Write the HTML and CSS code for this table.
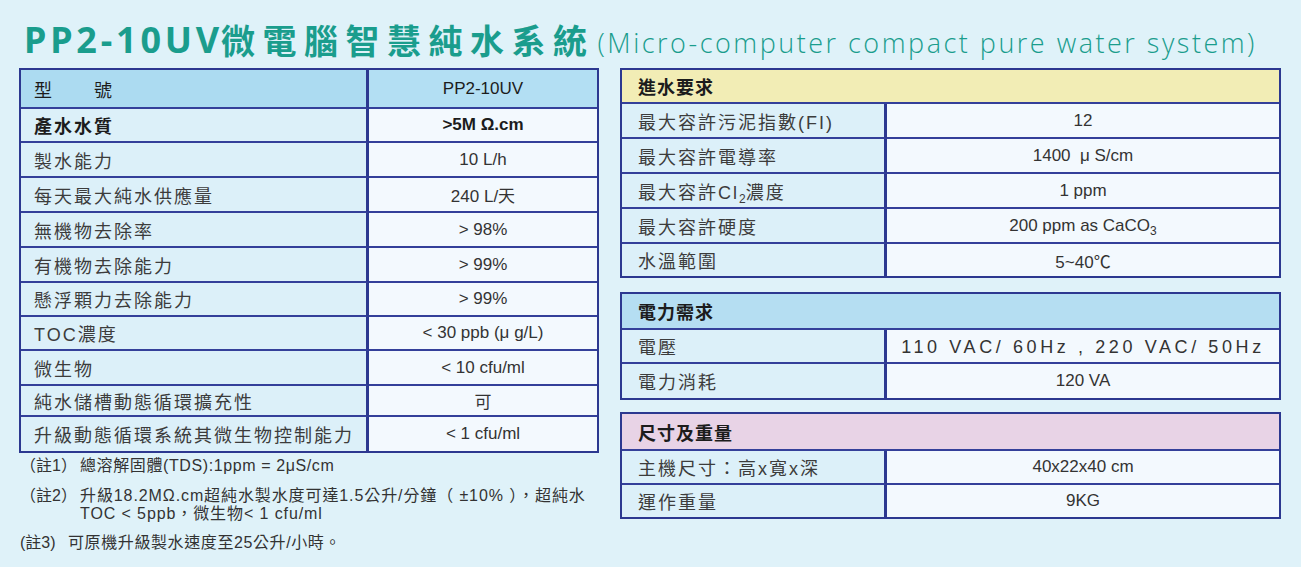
FILE: index.html
```html
<!DOCTYPE html>
<html lang="zh-Hant">
<head>
<meta charset="utf-8">
<title>PP2-10UV微電腦智慧純水系統</title>
<link rel="stylesheet" href="styles.css">
</head>
<body>
<div class="page">
  <h1 class="title"><span class="t-latin">PP2-10UV</span><span class="t-cjk">微電腦智慧純水系統</span><span class="t-en">(Micro-computer compact pure water system)</span></h1>
  <div class="content">
    <div class="left">
      <div class="spec main">
        <div class="cell lab head">型　　號</div><div class="cell val head">PP2-10UV</div>
        <div class="cell lab strong">產水水質</div><div class="cell val strong">&gt;5M Ω.cm</div>
        <div class="cell lab">製水能力</div><div class="cell val">10 L/h</div>
        <div class="cell lab">每天最大純水供應量</div><div class="cell val">240 L/天</div>
        <div class="cell lab">無機物去除率</div><div class="cell val">&gt; 98%</div>
        <div class="cell lab">有機物去除能力</div><div class="cell val">&gt; 99%</div>
        <div class="cell lab">懸浮顆力去除能力</div><div class="cell val">&gt; 99%</div>
        <div class="cell lab">TOC濃度</div><div class="cell val">&lt; 30 ppb (μ g/L)</div>
        <div class="cell lab">微生物</div><div class="cell val">&lt; 10 cfu/ml</div>
        <div class="cell lab">純水儲槽動態循環擴充性</div><div class="cell val">可</div>
        <div class="cell lab last">升級動態循環系統其微生物控制能力</div><div class="cell val last">&lt; 1 cfu/ml</div>
      </div>
      <div class="notes">
        <div class="note n1"><span class="nl">（註1）</span><span class="nt">總溶解固體(TDS):1ppm = 2μS/cm</span></div>
        <div class="note n2"><span class="nl">（註2）</span><span class="nt">升級18.2MΩ.cm超純水製水度可達1.5公升/分鐘（ ±10% ），超純水<br>TOC &lt; 5ppb，微生物&lt; 1 cfu/ml</span></div>
        <div class="note n3"><span class="nl">(註3)</span><span class="nt">可原機升級製水速度至25公升/小時。</span></div>
      </div>
    </div>
    <div class="right">
      <div class="spec side s1">
        <div class="cap yellow">進水要求</div>
        <div class="cell lab">最大容許污泥指數(FI)</div><div class="cell val">12</div>
        <div class="cell lab">最大容許電導率</div><div class="cell val">1400 &nbsp;μ S/cm</div>
        <div class="cell lab"><span>最大容許Cl<sub>2</sub>濃度</span></div><div class="cell val">1 ppm</div>
        <div class="cell lab">最大容許硬度</div><div class="cell val"><span>200 ppm as CaCO<sub>3</sub></span></div>
        <div class="cell lab last">水溫範圍</div><div class="cell val last">5~40℃</div>
      </div>
      <div class="spec side s2">
        <div class="cap blue">電力需求</div>
        <div class="cell lab">電壓</div><div class="cell val wide">110 VAC/ 60Hz , 220 VAC/ 50Hz</div>
        <div class="cell lab last">電力消耗</div><div class="cell val last">120 VA</div>
      </div>
      <div class="spec side s3">
        <div class="cap pink">尺寸及重量</div>
        <div class="cell lab">主機尺寸：高x寬x深</div><div class="cell val">40x22x40 cm</div>
        <div class="cell lab last">運作重量</div><div class="cell val last">9KG</div>
      </div>
    </div>
  </div>
</div>
</body>
</html>
```
FILE: styles.css
```css
* { box-sizing: border-box; }

html, body {
  margin: 0;
  padding: 0;
  background: #dff2f9;
}

body {
  font-family: "Liberation Sans", "Noto Sans CJK TC", sans-serif;
  color: #3a3a3a;
}

.page {
  width: 1301px;
  height: 567px;
  padding-left: 19px;
  overflow: hidden;
}

/* ---------- title ---------- */
.title {
  margin: 0 0 8px 0;
  padding-top: 12px;
  height: 68px;
  line-height: 40px;
  color: #1a9d8d;
  white-space: nowrap;
  display: flex;
  align-items: center;
}

.t-latin {
  font-family: "Noto Sans", "Noto Sans CJK TC", sans-serif;
  font-weight: 700;
  font-size: 36px;
  letter-spacing: 3.8px;
  margin-left: 5px;
}

.t-cjk {
  font-family: "Noto Sans CJK TC", sans-serif;
  font-weight: 700;
  font-size: 34px;
  letter-spacing: 7.5px;
  margin-left: -2px;
}

.t-en {
  font-family: "Open Sans", sans-serif;
  font-weight: 300;
  font-size: 27px;
  letter-spacing: 2.5px;
  margin-left: 3px;
  padding-top: 6px;
}

/* ---------- layout ---------- */
.content {
  display: flex;
  align-items: flex-start;
  margin-top: -8px;
}

.left {
  width: 580px;
}

.right {
  width: 661px;
  margin-left: 21px;
  display: flex;
  flex-direction: column;
}

/* ---------- spec tables ---------- */
.spec {
  display: grid;
  border: 2px solid #2c3890;
}

.main {
  width: 580px;
  grid-template-columns: 348px 1fr;
  grid-template-rows: 39px 34px 35px 35px 35px 35px 34px 34px 35px 31px 34px;
}

.side {
  width: 661px;
  grid-template-columns: 265px 1fr;
}

.s1 { grid-template-rows: 34px 35px 35px 35px 35px 32px; }
.s2 { grid-template-rows: 36px 34px 34px; margin-top: 14px; }
.s3 { grid-template-rows: 37px 34px 32px; margin-top: 12px; }

.cell {
  display: flex;
  align-items: center;
  border-bottom: 2px solid #34409a;
  font-size: 17px;
  white-space: nowrap;
}

.cell.last { border-bottom: none; }

.lab {
  background: #dcf0f9;
  border-right: 3px solid #2c3890;
  padding-left: 13px;
  font-size: 18px;
  letter-spacing: 2px;
  color: #3c3c3c;
}

.side .lab { padding-left: 16px; }

.val {
  background: #f3f9fe;
  justify-content: center;
  color: #333;
}

.head {
  background: #acdbf1;
  color: #1c1c1c;
}

.val.head { background: #b3dff3; }

.strong {
  font-weight: 700;
  color: #1c1c1c;
}

.wide {
  font-size: 18px;
  letter-spacing: 3.6px;
  padding-top: 2px;
}

sub {
  font-size: 12px;
  vertical-align: -4px;
  line-height: 0;
  letter-spacing: 0;
}

.cap {
  grid-column: 1 / -1;
  display: flex;
  align-items: center;
  padding-left: 16px;
  border-bottom: 2px solid #34409a;
  font-weight: 700;
  font-size: 18px;
  letter-spacing: 1px;
  color: #1c1c1c;
}

.yellow { background: #f2edb5; }
.blue { background: #b5def2; }
.pink { background: #e8d3e6; }

/* ---------- notes ---------- */
.notes {
  padding-top: 4px;
  font-size: 16px;
  color: #333;
  line-height: 18px;
}

.note {
  display: flex;
  white-space: nowrap;
  margin-left: 1px;
}

.n2 { margin-top: 12px; }
.n3 { margin-top: 11px; }

.nl { width: 60px; flex: none; }
.n3 .nl { width: 48px; }

.nt { letter-spacing: 0.6px; }
.n2 .nt { letter-spacing: 0.9px; }
```
